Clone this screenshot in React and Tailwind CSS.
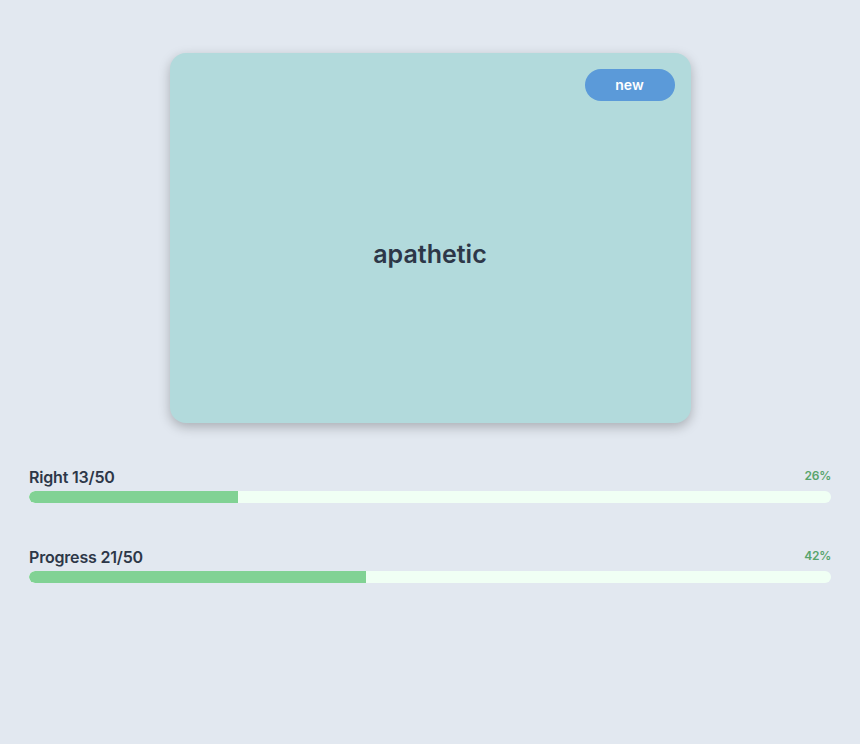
function StatBar({ label, value, total }) {
  const pct = Math.round((value / total) * 100);
  return (
    <div>
      <div className="flex items-start justify-between">
        <span className="text-base font-semibold leading-6 tracking-[-0.012em] text-[#2d3748]">
          {label} {value}/{total}
        </span>
        <span className="mt-[3px] text-xs font-semibold tracking-[-0.02em] text-[#58a46c]">{pct}%</span>
      </div>
      <div className="mt-[2px] h-3 w-full overflow-hidden rounded-full bg-[#f0fff4]">
        <div className="h-full rounded-l-full bg-[#81d294]" style={{ width: `${pct}%` }} />
      </div>
    </div>
  );
}

export default function App() {
  return (
    <div className="min-h-screen bg-[#e2e8f0] font-['Inter',sans-serif]">
      <div className="flex justify-center pt-[53px]">
        <div className="relative flex h-[370px] w-[521px] items-center justify-center rounded-2xl bg-[#b2dadc] pt-[34px] shadow-[0_4px_12px_rgba(0,0,0,0.25)]">
          <span className="absolute right-[16px] top-[16px] flex h-8 w-[90px] items-center justify-center rounded-full bg-[#5b9ad9] text-sm font-semibold text-white">
            new
          </span>
          <span className="text-[25px] font-semibold text-[#2d3748]">apathetic</span>
        </div>
      </div>
      <div className="mt-[42px] flex flex-col gap-[42px] px-[29px]">
        <StatBar label="Right" value={13} total={50} />
        <StatBar label="Progress" value={21} total={50} />
      </div>
    </div>
  );
}
